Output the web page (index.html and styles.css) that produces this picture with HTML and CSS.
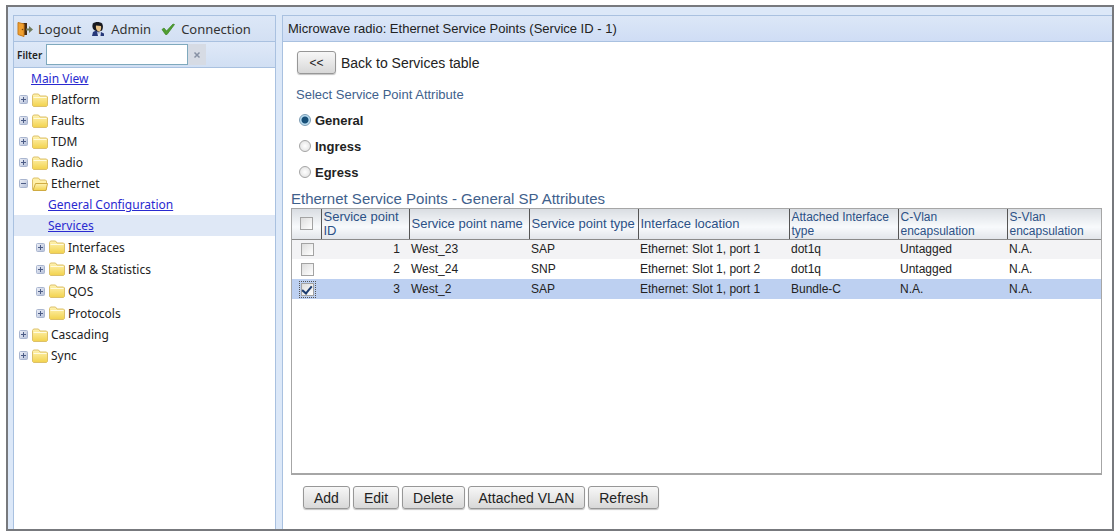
FILE: index.html
```html
<!DOCTYPE html>
<html lang="en">
<head>
<meta charset="utf-8">
<title>Ethernet Service Points</title>
<link rel="stylesheet" href="styles.css">
</head>
<body>
<svg class="defs" aria-hidden="true">
  <defs>
    <linearGradient id="gold" x1="0" y1="0" x2="0" y2="1"><stop offset="0" stop-color="#fff3b4"/><stop offset="1" stop-color="#f2d24c"/></linearGradient>
    <linearGradient id="box" x1="0" y1="0" x2="1" y2="1"><stop offset="0" stop-color="#eef1f9"/><stop offset="1" stop-color="#b4bfd8"/></linearGradient>
    <symbol id="folder" viewBox="0 0 16 14">
      <path d="M.5 12.5V2.5l1-1.5h5l1.5 2h6.500l1 1v8.500l-1 1H1.500z" fill="url(#gold)" stroke="#dcc06a"/>
      <path d="M1.500 4.500h13" stroke="#fffbe0"/>
    </symbol>
    <symbol id="folder-open" viewBox="0 0 16 14">
      <path d="M.5 12.500V2.500l1-1.500h5l1.500 2h5.500l1 1v8.500z" fill="#fff0a8" stroke="#dcc06a"/>
      <path d="M1 13.500L3.500 6.500h12L14 13.500z" fill="url(#gold)" stroke="#cfab42"/>
    </symbol>
    <symbol id="plus" viewBox="0 0 9 9">
      <rect x=".5" y=".5" width="8" height="8" rx="1" fill="url(#box)" stroke="#a9b5cf"/>
      <path d="M2 4.500h5M4.500 2v5" stroke="#4c5c86"/>
    </symbol>
    <symbol id="minus" viewBox="0 0 9 9">
      <rect x=".5" y=".5" width="8" height="8" rx="1" fill="url(#box)" stroke="#a9b5cf"/>
      <path d="M2 4.500h5" stroke="#4c5c86"/>
    </symbol>
  </defs>
</svg>
<div class="window">
  <aside class="sidebar">
    <nav class="topbar">
      <button class="tool" type="button">
        <svg class="tool-icon" viewBox="0 0 16 16"><path d="M5 2h5v12H5z" fill="#4a2c10"/><path d="M1 1.500l6 1.500v12.500l-6-2z" fill="#f0a030" stroke="#c67a1c"/><path d="M9 7.500h3V5l4 3.500-4 3.500V9.500H9z" fill="#6f7b5c"/><circle cx="5.500" cy="8.500" r=".8" fill="#7a4812"/></svg>
        Logout</button>
      <button class="tool" type="button">
        <svg class="tool-icon" viewBox="0 0 16 16"><path d="M3 2.500C5 .5 10 .5 12 2.500c1.500 2 1 5 0 7L8 11 4 9C2 7 2 4.500 3 2.500z" fill="#17181f"/><path d="M6 4.500l5 .5c.5 2 0 4.500-1.500 5.500C7 10.500 5.500 8 6 4.500z" fill="#e8c287"/><path d="M2 15l1-4 3-1.500 3 2.500 2-1 3 1.500v2.500z" fill="#27397a"/><path d="M7 10.500l2 2 2-2-.5 4.500H8z" fill="#dfe6f5"/></svg>
        Admin</button>
      <button class="tool" type="button">
        <svg class="tool-icon" viewBox="0 0 16 16"><path d="M2 8.500l2-1.500 2.500 3L13 3l1.500.5L7 13.500H5.500z" fill="#4f9e31" stroke="#3b8423" stroke-width=".7"/></svg>
        Connection</button>
    </nav>
    <div class="filter">
      <label for="filter">Filter</label><input id="filter" class="filter-box" type="text"><button class="clear" type="button" aria-label="Clear filter"><svg viewBox="0 0 8 8" class="cross"><path d="M1.500 1.500l5 5M6.500 1.500l-5 5" stroke="#8690a3" stroke-width="1.500"/></svg></button>
    </div>
    <ul class="tree">
      <li class="row first"><a href="#">Main View</a></li>
      <li class="row"><svg class="toggle"><use href="#plus"/></svg><svg class="folder"><use href="#folder"/></svg>Platform</li>
      <li class="row"><svg class="toggle"><use href="#plus"/></svg><svg class="folder"><use href="#folder"/></svg>Faults</li>
      <li class="row"><svg class="toggle"><use href="#plus"/></svg><svg class="folder"><use href="#folder"/></svg>TDM</li>
      <li class="row"><svg class="toggle"><use href="#plus"/></svg><svg class="folder"><use href="#folder"/></svg>Radio</li>
      <li class="row"><svg class="toggle"><use href="#minus"/></svg><svg class="folder"><use href="#folder-open"/></svg>Ethernet</li>
      <li>
        <ul class="branch">
          <li class="row leaf"><a href="#">General Configuration</a></li>
          <li class="row leaf current"><a href="#">Services</a></li>
          <li class="row sub"><svg class="toggle"><use href="#plus"/></svg><svg class="folder"><use href="#folder"/></svg>Interfaces</li>
          <li class="row sub"><svg class="toggle"><use href="#plus"/></svg><svg class="folder"><use href="#folder"/></svg>PM &amp; Statistics</li>
          <li class="row sub"><svg class="toggle"><use href="#plus"/></svg><svg class="folder"><use href="#folder"/></svg>QOS</li>
          <li class="row sub"><svg class="toggle"><use href="#plus"/></svg><svg class="folder"><use href="#folder"/></svg>Protocols</li>
        </ul>
      </li>
      <li class="row"><svg class="toggle"><use href="#plus"/></svg><svg class="folder"><use href="#folder"/></svg>Cascading</li>
      <li class="row"><svg class="toggle"><use href="#plus"/></svg><svg class="folder"><use href="#folder"/></svg>Sync</li>
    </ul>
  </aside>
  <main class="main">
    <h1 class="title">Microwave radio: Ethernet Service Points (Service ID - 1)</h1>
    <div class="content">
      <div class="back"><button id="back" class="btn btn-back" type="button">&lt;&lt;</button><label for="back">Back to Services table</label></div>
      <fieldset class="attrs">
        <legend>Select Service Point Attribute</legend>
        <label class="choice"><input type="radio" name="attr" checked>General</label>
        <label class="choice"><input type="radio" name="attr">Ingress</label>
        <label class="choice"><input type="radio" name="attr">Egress</label>
      </fieldset>
      <h2 class="caption">Ethernet Service Points - General SP Attributes</h2>
      <div class="grid">
        <table class="points">
          <colgroup><col class="c-check"><col class="c-id"><col class="c-name"><col class="c-type"><col class="c-loc"><col class="c-att"><col class="c-cvlan"><col class="c-svlan"></colgroup>
          <thead><tr><th><input type="checkbox" aria-label="Select all"></th><th>Service point ID</th><th>Service point name</th><th>Service point type</th><th>Interface location</th><th class="small">Attached Interface type</th><th class="small">C-Vlan encapsulation</th><th class="small">S-Vlan encapsulation</th></tr></thead>
          <tbody>
            <tr><td><input type="checkbox" aria-label="Select 1"></td><td>1</td><td>West_23</td><td>SAP</td><td>Ethernet: Slot 1, port 1</td><td>dot1q</td><td>Untagged</td><td>N.A.</td></tr>
            <tr><td><input type="checkbox" aria-label="Select 2"></td><td>2</td><td>West_24</td><td>SNP</td><td>Ethernet: Slot 1, port 2</td><td>dot1q</td><td>Untagged</td><td>N.A.</td></tr>
            <tr class="selected"><td><input type="checkbox" aria-label="Select 3" checked></td><td>3</td><td>West_2</td><td>SAP</td><td>Ethernet: Slot 1, port 1</td><td>Bundle-C</td><td>N.A.</td><td>N.A.</td></tr>
          </tbody>
        </table>
      </div>
      <div class="actions">
        <button class="btn" type="button">Add</button>
        <button class="btn" type="button">Edit</button>
        <button class="btn" type="button">Delete</button>
        <button class="btn" type="button">Attached VLAN</button>
        <button class="btn" type="button">Refresh</button>
      </div>
    </div>
  </main>
</div>
</body>
</html>
```
FILE: styles.css
```css
* { box-sizing: border-box; }
body {
  margin: 0;
  padding: 5px 1px 1px 6px;
  height: 100vh;
  background: #fff;
  color: #222;
  font-family: "Liberation Sans", Arial, sans-serif;
  font-size: 13px;
}
.defs { position: absolute; width: 0; height: 0; }
ul { margin: 0; padding: 0; list-style: none; }
button { font-family: inherit; }

.window {
  display: flex;
  gap: 6px;
  height: 100%;
  padding: 8px 0 0 5px;
  border: 2px solid #77797d;
  background: #dce8f8;
}

/* Sidebar */
.sidebar {
  display: flex;
  flex-direction: column;
  flex: 0 0 263px;
  border: solid #a9c1e0;
  border-width: 1px 1px 0 1px;
  background: #fff;
  font-family: "Noto Sans", sans-serif;
  font-size: 12px;
}
.topbar {
  display: flex;
  gap: 9px;
  height: 26px;
  padding: 0 3px;
  border-bottom: 1px solid #a9c1e0;
  background: linear-gradient(#dce7f7, #d3e0f3);
}
.tool {
  display: flex;
  align-items: center;
  gap: 5px;
  padding: 0;
  border: 0;
  background: none;
  color: #333;
  font-size: 13px;
}
.tool-icon { width: 16px; height: 16px; }
.filter {
  display: flex;
  align-items: center;
  height: 26px;
  padding-left: 3px;
  border-bottom: 1px solid #a9c1e0;
  background: linear-gradient(#dfe9f8, #d1dff3);
  font-size: 10px;
}
.filter label { width: 29px; font-weight: 600; }
.filter-box {
  width: 142px;
  height: 21px;
  border: 1px solid #7fa9bd;
  background: #fff;
}
.clear {
  display: grid;
  place-items: center;
  width: 18px;
  height: 21px;
  padding: 0;
  border: 0;
  background: #d6dbe4;
}
.cross { width: 8px; height: 8px; }
.row {
  display: flex;
  align-items: center;
  height: 21px;
  padding-left: 5px;
}
.row a { color: #2a2ad0; }
.first { padding-left: 17px; }
.leaf { padding-left: 34px; }
.sub { height: 22px; padding-left: 22px; }
.current { background: #dfe8f6; }
.toggle { width: 9px; height: 9px; margin-right: 4px; }
.folder { width: 16px; height: 14px; margin-right: 3px; }

/* Main panel */
.main {
  display: flex;
  flex-direction: column;
  flex: 1;
  min-width: 0;
  border: solid #a9c1e0;
  border-width: 1px 0 0 1px;
  background: #fff;
}
.title {
  height: 26px;
  margin: 0;
  padding-left: 5px;
  border-bottom: 1px solid #a9c1e0;
  background: linear-gradient(#dce7f7, #cfddf5);
  font-size: 13px;
  font-weight: 400;
  line-height: 25px;
}
.content {
  display: flex;
  flex-direction: column;
  flex: 1;
  padding: 9px 10px 20px 8px;
}
.back {
  display: flex;
  align-items: center;
  gap: 5px;
  padding-left: 6px;
  font-size: 14px;
}
.btn {
  height: 23px;
  padding: 0 10px;
  border: 1px solid #979797;
  border-radius: 3px;
  background: linear-gradient(#f7f7f7, #d8d8d8);
  box-shadow: 0 1px 1px #c4c4c4;
  color: #222;
  font-size: 14px;
}
.btn-back { width: 39px; padding: 0; font-size: 12px; }
.attrs { margin: 12px 0 0; padding: 3px 0 0 5px; border: 0; }
.attrs legend { padding: 0; color: #3f618c; font-size: 13px; line-height: 18px; }
.choice {
  display: flex;
  align-items: center;
  gap: 4px;
  height: 26px;
  font-size: 13px;
  font-weight: 700;
}
input[type="radio"] {
  appearance: none;
  width: 12px;
  height: 12px;
  margin: 0 0 0 3px;
  border: 1px solid #a4a4a4;
  border-radius: 50%;
  background: radial-gradient(#fff, #ddd);
}
input[type="radio"]:checked {
  border-color: #7c9cb4;
  background: radial-gradient(circle, #174f78 0 3px, #b9dcf0 4px);
}
.caption {
  margin: 5px 0 0;
  color: #3f618c;
  font-size: 15px;
  font-weight: 400;
  line-height: 18px;
}
.grid { flex: 1; border: solid #a6a6a6; border-width: 1px 1px 2px 1px; }
.points { width: 100%; border-collapse: collapse; table-layout: fixed; }
.c-check { width: 29px; }
.c-id { width: 88px; }
.c-name { width: 120px; }
.c-type { width: 109px; }
.c-loc { width: 151px; }
.c-att { width: 109px; }
.c-cvlan { width: 109px; }
.points th {
  height: 30px;
  padding: 0 0 0 2px;
  border-bottom: 1px solid #8a8a8a;
  border-left: 1px solid #555;
  background: linear-gradient(#d9dde2, #f8fafc 60%, #e2e5ea);
  color: #2c5186;
  font-size: 13px;
  font-weight: 400;
  line-height: 14px;
  text-align: left;
}
.points th.small { font-size: 12px; }
.points th:first-child { border-left: 0; }
.points td { height: 20px; padding: 0 2px; font-size: 12px; }
.points th:first-child, .points td:first-child { padding: 0 0 0 1px; text-align: center; }
.points td:nth-child(2) { padding-right: 9px; text-align: right; }
.points tbody tr:nth-child(odd) { background: #f3f3f5; }
.points tbody tr.selected { background: #bdd0f1; }
input[type="checkbox"] {
  appearance: none;
  display: block;
  width: 13px;
  height: 13px;
  margin: 0 auto;
  border: 1px solid #a3a3a3;
  background: linear-gradient(135deg, #ddd, #fff);
}
input[type="checkbox"]:checked {
  display: grid;
  place-items: center;
  outline: 1px dotted #555;
  outline-offset: 1px;
}
input[type="checkbox"]:checked::after {
  content: "";
  width: 4px;
  height: 8px;
  border: solid #1c3c70;
  border-width: 0 2px 2px 0;
  transform: rotate(40deg);
}
.actions { display: flex; gap: 3px; padding: 11px 0 0 12px; }
```
